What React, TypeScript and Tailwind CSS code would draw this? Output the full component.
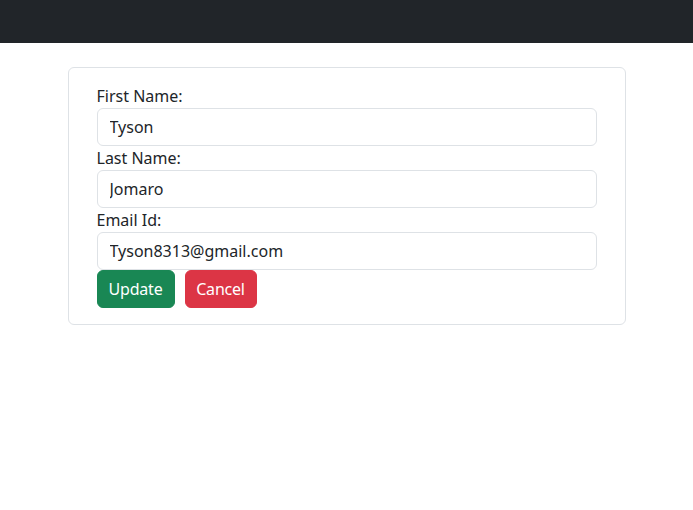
import React from "react";

const font = { fontFamily: '"Segoe UI", "Noto Sans", "Liberation Sans", sans-serif' };

function Field({ label, value }: { label: string; value: string }) {
  return (
    <div className="flex flex-col">
      <label className="text-[16px] leading-[24px] text-[#212529]">{label}</label>
      <input
        readOnly
        value={value}
        className="h-[38px] w-full rounded-[6px] border border-[#dee2e6] bg-white px-[12px] py-[6px] text-[16px] leading-[24px] text-[#212529] outline-none"
        style={font}
      />
    </div>
  );
}

export default function App() {
  return (
    <div className="min-h-[510px] w-full bg-white" style={font}>
      <div className="h-[43px] w-full bg-[#212529]" />
      <div className="mt-[24px] flex justify-center">
        <div className="w-[558px] rounded-[6px] border border-[#dee2e6] px-[28px] pb-[16px] pt-[16px]">
          <div className="flex flex-col">
            <Field label="First Name:" value="Tyson" />
            <Field label="Last Name:" value="Jomaro" />
            <Field label="Email Id:" value="Tyson8313@gmail.com" />
            <div className="flex gap-[10px]">
              <button className="h-[38px] w-[78px] rounded-[6px] border border-[#198754] bg-[#198754] text-[16px] leading-[24px] tracking-[-0.2px] text-white">
                Update
              </button>
              <button className="h-[38px] w-[72px] rounded-[6px] border border-[#dc3545] bg-[#dc3545] text-[16px] leading-[24px] tracking-[-0.2px] text-white">
                Cancel
              </button>
            </div>
          </div>
        </div>
      </div>
    </div>
  );
}
